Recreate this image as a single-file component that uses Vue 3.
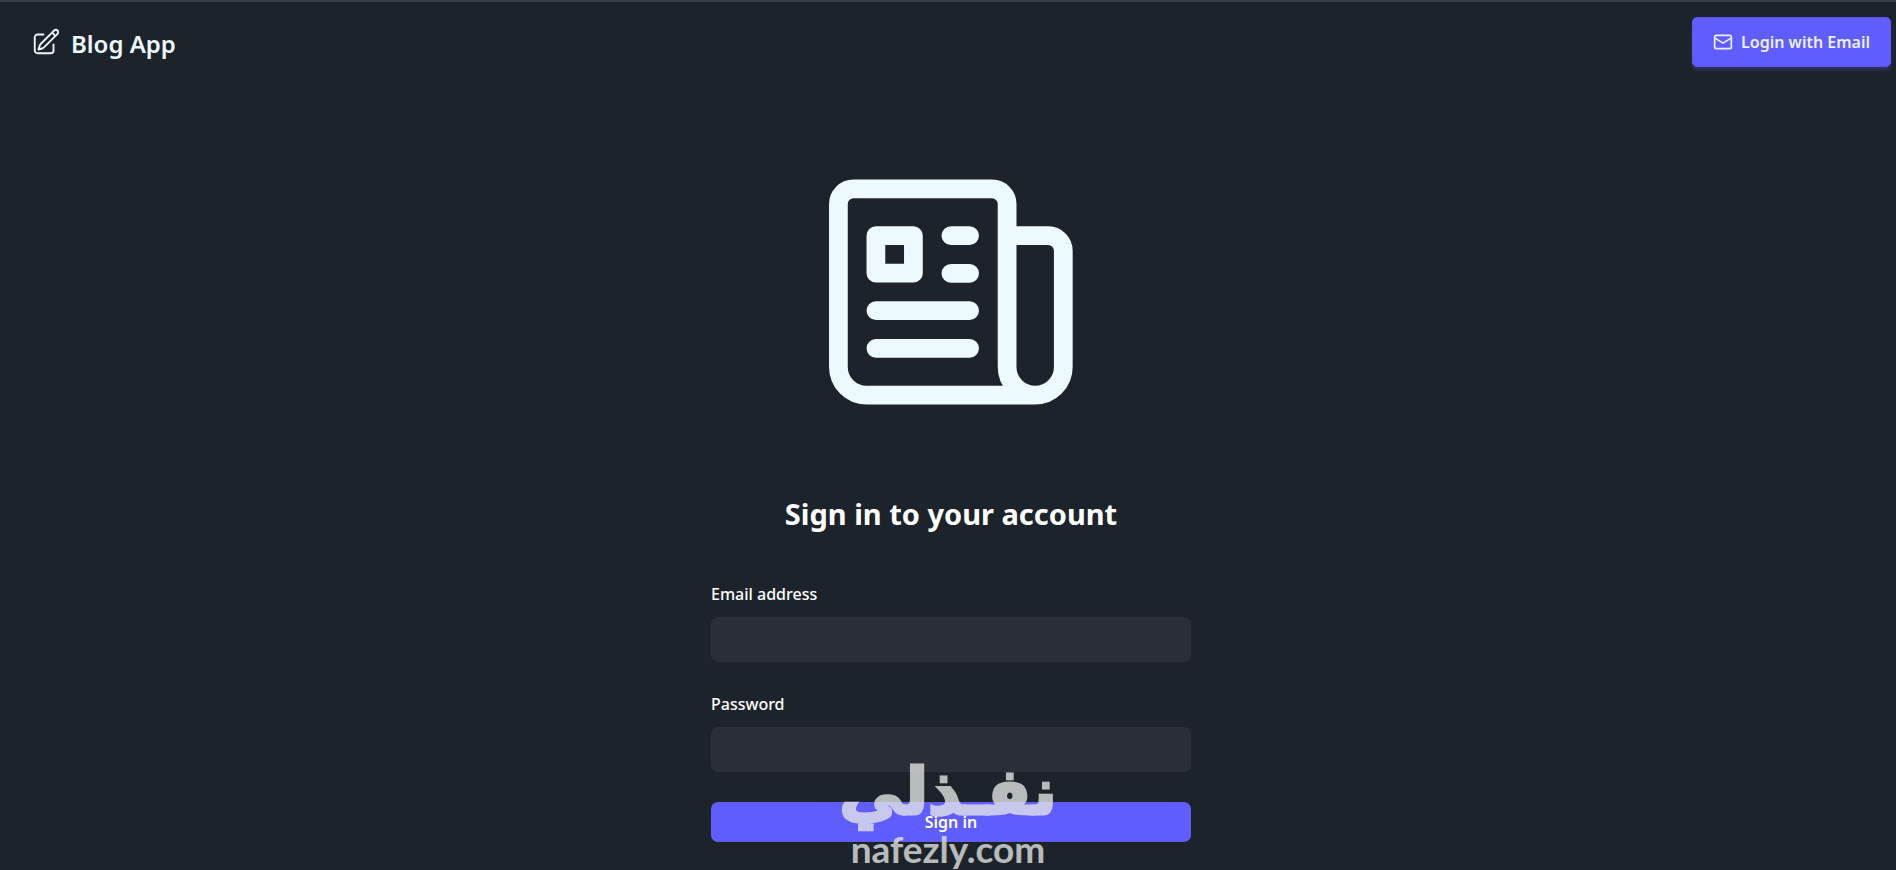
<template>
  <div class="page">
    <header class="navbar">
      <a href="#" class="brand">
        <svg class="brand-icon" viewBox="0 0 24 24" fill="none" stroke="currentColor" stroke-width="1.5" stroke-linecap="round" stroke-linejoin="round" aria-hidden="true">
          <path d="m16.862 4.487 1.687-1.688a1.875 1.875 0 1 1 2.652 2.652L10.582 16.07a4.5 4.5 0 0 1-1.897 1.13L6 18l.8-2.685a4.5 4.5 0 0 1 1.13-1.897l8.932-8.931Zm0 0L19.5 7.125M18 14v4.75A2.25 2.25 0 0 1 15.75 21H5.25A2.25 2.25 0 0 1 3 18.75V8.25A2.25 2.25 0 0 1 5.25 6H10" />
        </svg>
        <span class="brand-name">Blog App</span>
      </a>
      <button type="button" class="btn-login" @click="focusEmail">
        <svg class="mail-icon" viewBox="0 0 24 24" fill="none" stroke="currentColor" stroke-width="2" stroke-linecap="round" stroke-linejoin="round" aria-hidden="true">
          <rect width="20" height="16" x="2" y="4" rx="2" />
          <path d="m22 7-8.97 5.7a1.94 1.94 0 0 1-2.06 0L2 7" />
        </svg>
        Login with Email
      </button>
    </header>

    <main class="content">
      <svg class="newspaper" viewBox="0 0 244 225" fill="none" stroke="currentColor" stroke-width="18.75" stroke-linecap="round" aria-hidden="true">
        <path stroke-linecap="butt" d="M178.1 56.2V24.4a15 15 0 0 0-15-15H24.4a15 15 0 0 0-15 15v163.1a28.1 28.1 0 0 0 28.1 28.1h168.7a28.1 28.1 0 0 0 28.1-28.1V71.2a15 15 0 0 0-15-15h-41.2v131.3a28.1 28.1 0 0 0 28.1 28.1" />
        <rect x="46.9" y="56.2" width="37.5" height="37.5" stroke-linejoin="round" />
        <path d="M121.9 56.2h18.7M121.9 93.8h18.7M46.9 131.2h93.7M46.9 168.8h93.7" />
      </svg>

      <h2 class="title">Sign in to your account</h2>

      <form class="form" @submit.prevent>
        <div class="field">
          <label for="email">Email address</label>
          <input id="email" ref="emailInput" v-model="form.email" type="email" autocomplete="email" required>
        </div>
        <div class="field">
          <label for="password">Password</label>
          <input id="password" v-model="form.password" type="password" autocomplete="current-password" required>
        </div>
        <button type="submit" class="btn-submit">
          <span>Sign in</span>
        </button>
      </form>
    </main>

    <div class="watermark">
      <span class="watermark-ar" lang="ar" dir="rtl">نفـذلي</span>
      <span class="watermark-en">nafezly.com</span>
    </div>
  </div>
</template>

<script setup>
import { ref, reactive } from 'vue'

const emailInput = ref(null)

const form = reactive({
  email: '',
  password: ''
})

function focusEmail() {
  emailInput.value.focus()
}
</script>

<style>
body {
  margin: 0;
  background: #1d232a;
}
</style>

<style scoped>
.page {
  position: relative;
  box-sizing: border-box;
  min-height: 100vh;
  border-top: 2px solid #3b4048;
  background: #1d232a;
  color: #ecf9ff;
  font-family: "Noto Sans", "Open Sans", sans-serif;
}

.navbar {
  display: flex;
  align-items: center;
  justify-content: space-between;
  padding: 15px 5px 15px 31px;
}

.brand {
  display: flex;
  align-items: center;
  gap: 10px;
  color: inherit;
  font-size: 24px;
  font-weight: 600;
  line-height: 34px;
  text-decoration: none;
}

.brand-name {
  padding-top: 3px;
}

.brand-icon {
  width: 30px;
  height: 30px;
}

.btn-login {
  display: flex;
  align-items: center;
  gap: 8px;
  height: 50px;
  padding: 0 20px;
  border: 1px solid #5956f0;
  border-radius: 5px;
  background: #605dff;
  box-shadow: 0 3px 4px -1px rgba(96, 93, 255, 0.4);
  color: #edf1fe;
  font: inherit;
  font-size: 16px;
  font-weight: 600;
  cursor: pointer;
}

.mail-icon {
  width: 20px;
  height: 20px;
}

.content {
  display: flex;
  flex-direction: column;
  align-items: center;
  padding: 97px 0 28px 6px;
}

.newspaper {
  width: 244px;
  height: 226px;
}

.title {
  margin: 86px 0 46px;
  color: #fff;
  font-size: 29px;
  font-weight: 700;
  line-height: 45px;
}

.form {
  display: flex;
  flex-direction: column;
  gap: 30px;
  width: 100%;
  max-width: 480px;
}

.field {
  display: flex;
  flex-direction: column;
  gap: 10px;
}

.field label {
  color: #fff;
  font-size: 16px;
  font-weight: 500;
  line-height: 25px;
}

.field input {
  box-sizing: border-box;
  width: 100%;
  height: 45px;
  padding: 8px 15px;
  border: 1px solid #2d3139;
  border-radius: 7px;
  outline: none;
  background: #2a2e36;
  color: #fff;
  font: inherit;
  font-size: 18px;
}

.field input:focus {
  border-color: #605dff;
}

.btn-submit {
  height: 40px;
  border: 0;
  border-radius: 7px;
  background: #605dff;
  color: #fff;
  font: inherit;
  font-size: 16px;
  font-weight: 600;
  cursor: pointer;
}

/* keeps the button text readable over the watermark */
.btn-submit span {
  position: relative;
  z-index: 1;
}

.watermark {
  position: absolute;
  bottom: 0;
  left: 50%;
  display: flex;
  flex-direction: column;
  align-items: center;
  color: #e4e6e6;
  opacity: 0.78;
  pointer-events: none;
  transform: translateX(-50%);
}

.watermark-ar {
  font-family: "DejaVu Sans", sans-serif;
  font-size: 64px;
  font-weight: 700;
  line-height: 72px;
  white-space: nowrap;
  -webkit-text-stroke: 3px #e4e6e6;
}

.watermark-en {
  font-family: Lato, sans-serif;
  font-size: 37px;
  font-weight: 700;
  line-height: 42px;
}
</style>
